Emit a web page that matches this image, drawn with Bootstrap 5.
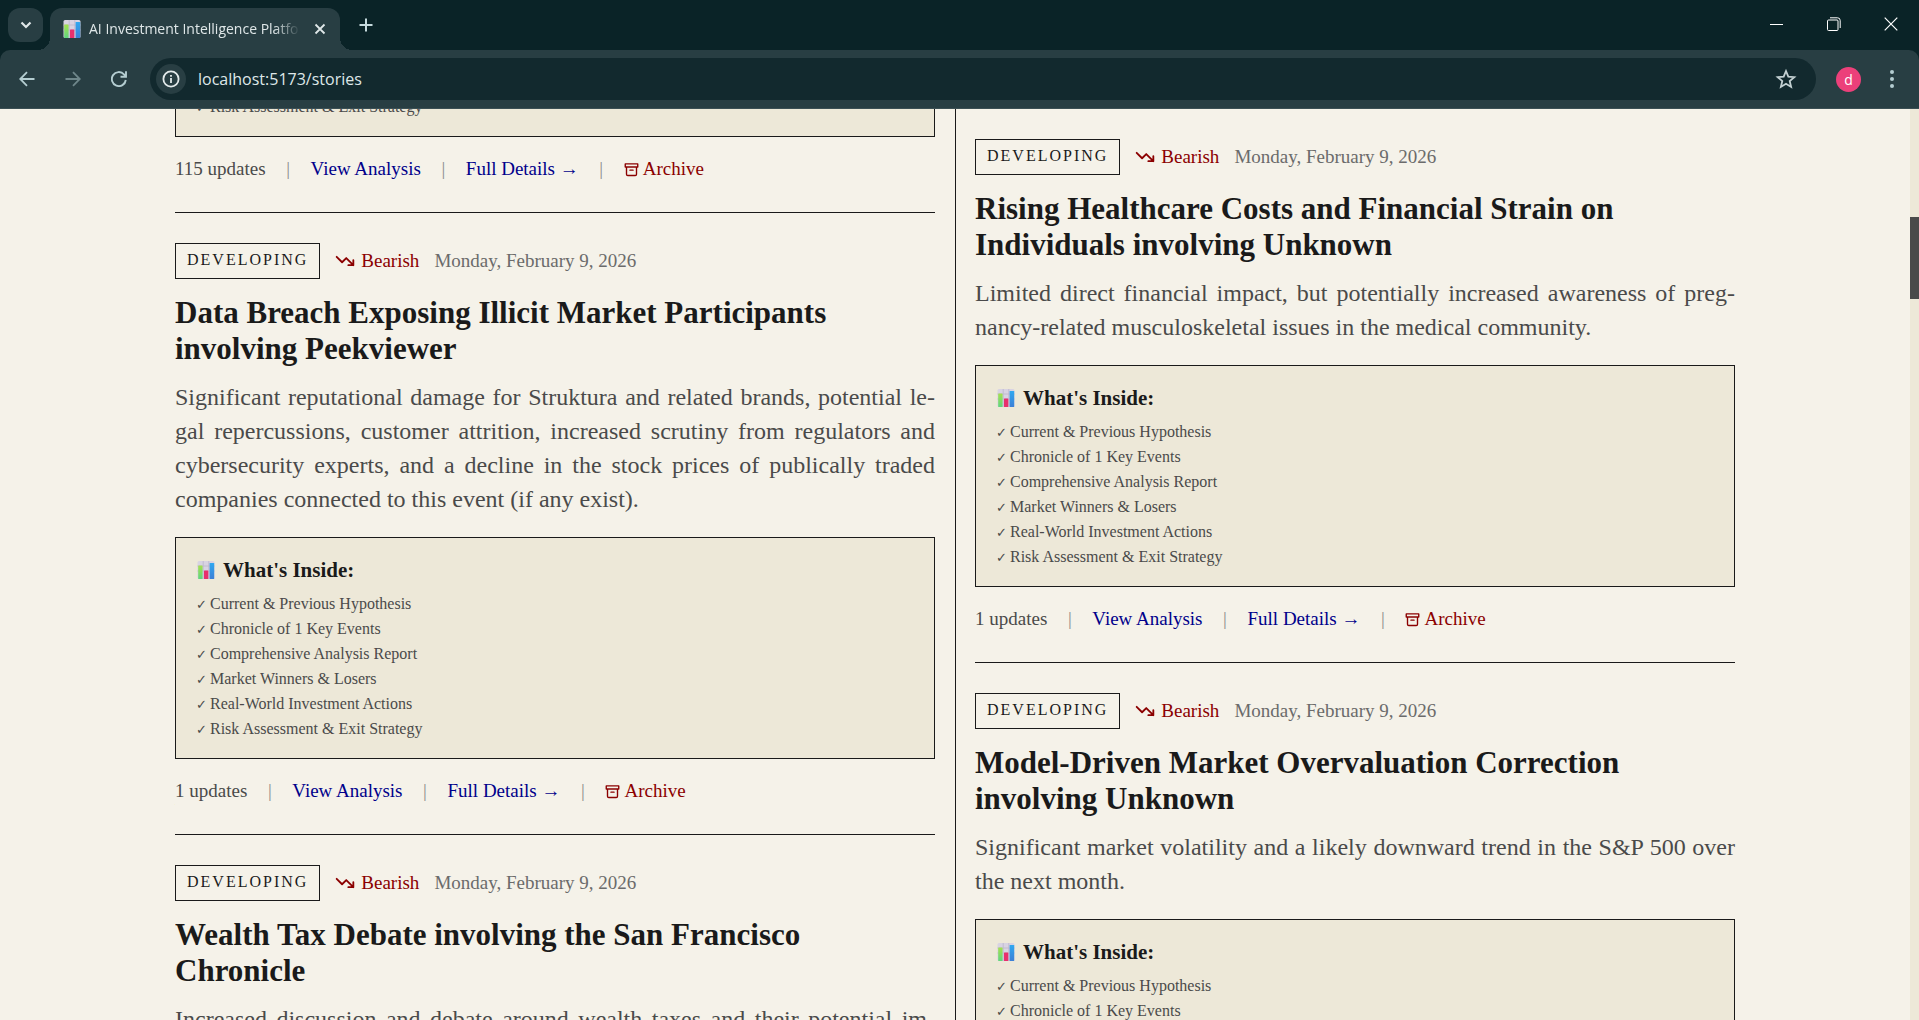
<!DOCTYPE html>
<html lang="en">
<head>
<meta charset="utf-8">
<meta name="viewport" content="width=device-width, initial-scale=1">
<title>AI Investment Intelligence Platform</title>
<link href="https://cdn.jsdelivr.net/npm/bootstrap@5.3.0/dist/css/bootstrap.min.css" rel="stylesheet">
<style>
:root { --ink: #1a1a1a; --paper: #f5f2e9; --sand: #ede8d8; --soft: #4a4a4a; --serif: "Liberation Serif", "Times New Roman", serif; --ui: "Open Sans", "Noto Sans", sans-serif; }
body { background: var(--paper); font-family: var(--serif); color: var(--ink); }
svg { display: block; flex: none; }
a { text-decoration: none; }

/* browser frame */
.tabstrip { height: 50px; background: #0a2327; padding-left: 8px; font-family: var(--ui); color: #dfe7e8; }
.plain { border: 0; background: none; padding: 0; color: inherit; display: flex; align-items: center; justify-content: center; }
.tabsearch { width: 35px; height: 34px; border-radius: 12px; background: #283e43; }
.tab-item { position: relative; width: 290px; height: 42px; margin-left: 7px; padding: 0 14px 0 13px; border-radius: 12px 12px 0 0; background: #283e43; font-size: 14px; }
.tab-item::before, .tab-item::after { content: ""; position: absolute; bottom: 0; width: 12px; height: 12px; }
.tab-item::before { left: -12px; background: radial-gradient(circle at 0 0, transparent 12px, #283e43 12px); }
.tab-item::after { right: -12px; background: radial-gradient(circle at 100% 0, transparent 12px, #283e43 12px); }
.tab-title { width: 211px; line-height: 20px; white-space: nowrap; overflow: hidden; -webkit-mask-image: linear-gradient(90deg, #000 185px, transparent 211px); mask-image: linear-gradient(90deg, #000 185px, transparent 211px); }
.winbtn { width: 57px; height: 48px; color: #fff; }
.newtab { width: 52px; height: 50px; }
.frame-top { background: #0a2327; }
.toolbar { height: 59px; padding: 0 16px; background: #283e43; border-bottom: 1px solid #3b4f54; border-radius: 10px 10px 0 0; color: #b4cdd1; font-family: var(--ui); }
.navbtn { width: 22px; height: 30px; }
.omnibox { height: 42px; border-radius: 21px; background: #12292e; margin: 0 20px; padding: 0 19px 0 6px; }
.siteinfo { width: 30px; height: 30px; border-radius: 50%; background: #283e43; color: #e3eaeb; }
.omnibox input { border: 0; outline: 0; background: none; color: #dfe7e8; font-size: 16px; line-height: 24px; padding: 0; }
.avatar { width: 25px; height: 25px; margin-right: 20px; border-radius: 50%; background: #ec407a; color: #fff; font-size: 14px; }

/* page */
.viewport { height: calc(100vh - 109px); }
.track { width: 9px; background: var(--sand); padding-top: 108px; }
.thumb { height: 82px; background: #4a4a4a; }
.paper-wrap { max-width: 1600px; padding: 0 20px; }
.col-left { padding-right: 20px; }
.col-right { padding-left: 19px; border-left: 1px solid var(--ink); }
.scrolled { margin-top: -194px; }
.story { padding: 30px 0 31px; border-bottom: 1px solid var(--ink); }
.story.scrolled { padding-top: 0; }
.status { border: 1px solid var(--ink); height: 36px; padding: 0 11px; font-size: 16px; line-height: 32px; letter-spacing: 2px; }
.meta { gap: 15px; font-size: 19px; line-height: 30px; }
.trend { gap: 6px; color: #8b0000; }
.date { color: #6b6b6b; }
.headline { margin: 16px 0 13px; font-size: 31px; line-height: 36px; font-weight: 700; }
.summary { margin: 0 0 21px; font-size: 24px; line-height: 34px; color: var(--soft); }
.full-line { display: block; text-align: justify; text-align-last: justify; white-space: nowrap; }
.inside { border: 1px solid var(--ink); background: var(--sand); padding: 20px; height: 222px; }
.inside h3 { margin: 0 0 9px; gap: 7px; font-size: 21px; line-height: 24px; font-weight: 700; }
.inside ul { font-size: 16px; line-height: 25px; color: var(--soft); }
.inside li::before { content: "✓"; font-family: "DejaVu Sans", sans-serif; font-size: 13px; line-height: 1; display: inline-block; width: 14px; }
.actions { margin-top: 20px; gap: 21px; font-size: 19px; line-height: 24px; color: var(--soft); }
.actions a { color: #00008b; }
.actions .archive { color: #8b0000; gap: 4px; }
.sep { width: 3px; display: flex; justify-content: center; color: #8c8c8c; }
</style>
</head>
<body class="overflow-hidden">

<svg width="0" height="0" class="position-absolute">
  <defs>
    <linearGradient id="gg" x1="0" y1="0" x2="0" y2="1"><stop offset="0" stop-color="#a5e04f"/><stop offset="1" stop-color="#5fd67e"/></linearGradient>
    <linearGradient id="gb" x1="0" y1="0" x2="0" y2="1"><stop offset="0" stop-color="#2fa8f0"/><stop offset="1" stop-color="#3d7fd6"/></linearGradient>
    <symbol id="chart" viewBox="0 0 18 18">
      <rect x=".5" y="0" width="17" height="18" rx="1.5" fill="#d8d3e2"/>
      <path d="M6.2 0v18M11.8 0v18M.5 5h17M.5 10h17" stroke="#bdb6cb" stroke-width=".8"/>
      <rect x="1.2" y="4.5" width="4.4" height="13.5" rx=".6" fill="url(#gg)"/>
      <rect x="7" y="9.5" width="4.3" height="8.5" rx=".6" fill="#e8306d"/>
      <rect x="12.6" y="2" width="4.6" height="16" rx=".6" fill="url(#gb)"/>
    </symbol>
    <symbol id="down" viewBox="0 0 24 24"><path d="M22 17l-8.500-8.500-5 5L2 7M16 17h6v-6" fill="none" stroke="currentColor" stroke-width="2.200" stroke-linecap="round" stroke-linejoin="round"/></symbol>
    <symbol id="box" viewBox="0 0 24 24"><path d="M2 3h20v5H2zM4 8v11.500q0 2 2 2h12q2 0 2-2V8M9.500 13h5" fill="none" stroke="currentColor" stroke-width="2.200" stroke-linejoin="round" stroke-linecap="round"/></symbol>
  </defs>
</svg>

<header class="frame-top">
  <div class="tabstrip d-flex">
    <button class="plain tabsearch mt-2" aria-label="Search tabs"><svg width="12" height="12" viewBox="0 0 12 12"><path d="M1.500 3.500L6 8l4.500-4.500" fill="none" stroke="currentColor" stroke-width="2.200"/></svg></button>
    <div class="tab-item d-flex align-items-center mt-2">
      <svg width="18" height="18" class="me-2"><use href="#chart"/></svg>
      <span class="tab-title">AI Investment Intelligence Platfo</span>
      <button class="plain ms-auto" aria-label="Close tab"><svg width="12" height="12" viewBox="0 0 12 12"><path d="M1.500 1.500l9 9M10.500 1.500l-9 9" stroke="currentColor" stroke-width="1.800"/></svg></button>
    </div>
    <button class="plain newtab" aria-label="New tab"><svg width="14" height="14" viewBox="0 0 14 14"><path d="M7 .5v13M.5 7h13" stroke="#c5dadd" stroke-width="2"/></svg></button>
    <div class="d-flex ms-auto">
      <button class="plain winbtn" aria-label="Minimize"><svg width="13" height="13" viewBox="0 0 13 13"><path d="M0 6.500h13" stroke="currentColor"/></svg></button>
      <button class="plain winbtn" aria-label="Restore"><svg width="14" height="14" viewBox="0 0 14 14"><path d="M3 .8h7.500q2.700 0 2.700 2.700V11" fill="none" stroke="currentColor"/><rect x=".5" y="3" width="10.500" height="10.500" rx="1" fill="none" stroke="currentColor"/></svg></button>
      <button class="plain winbtn" aria-label="Close"><svg width="14" height="14" viewBox="0 0 14 14"><path d="M.7.7l12.600 12.600M13.300.7L.7 13.300" stroke="currentColor" stroke-width="1.200"/></svg></button>
    </div>
  </div>
  <div class="toolbar d-flex align-items-center">
    <button class="plain navbtn" aria-label="Back"><svg width="16" height="16" viewBox="0 0 16 16"><path d="M15.500 8H1.500M8 1.200L1.200 8 8 14.800" fill="none" stroke="currentColor" stroke-width="1.800"/></svg></button>
    <button class="plain navbtn ms-4 opacity-50" aria-label="Forward"><svg width="16" height="16" viewBox="0 0 16 16"><path d="M.5 8h14M8 1.200L14.800 8 8 14.800" fill="none" stroke="currentColor" stroke-width="1.800"/></svg></button>
    <button class="plain navbtn ms-4" aria-label="Reload"><svg width="16" height="16" viewBox="0 0 16 16"><path d="M14.800 9A7 7 0 1 1 13 3.300L14.500 5M15 .3v5.500H9.500" fill="none" stroke="currentColor" stroke-width="1.900"/></svg></button>
    <div class="omnibox d-flex align-items-center flex-grow-1">
      <button class="plain siteinfo" aria-label="Site information"><svg width="18" height="18" viewBox="0 0 18 18"><circle cx="9" cy="9" r="7.600" fill="none" stroke="currentColor" stroke-width="1.800"/><path d="M9 8v5M9 5v1.800" stroke="currentColor" stroke-width="1.800"/></svg></button>
      <input class="flex-grow-1 ms-2 ps-1" type="text" aria-label="Address" value="localhost:5173/stories">
      <button class="plain" aria-label="Bookmark"><svg width="22" height="22" viewBox="0 0 22 22"><path d="M11 3l2.300 5.600 6 .5-4.600 3.900 1.400 5.900L11 15.700l-5.100 3.200 1.400-5.900L2.700 9.100l6-.5z" fill="none" stroke="#c3d0d2" stroke-width="1.800"/></svg></button>
    </div>
    <button class="plain avatar" aria-label="Profile">d</button>
    <button class="plain navbtn" aria-label="Menu"><svg width="4" height="18" viewBox="0 0 4 18" fill="currentColor"><circle cx="2" cy="2" r="2"/><circle cx="2" cy="9" r="2"/><circle cx="2" cy="16" r="2"/></svg></button>
  </div>
</header>

<div class="viewport d-flex overflow-hidden">
  <main class="flex-grow-1 overflow-hidden">
    <div class="paper-wrap container-fluid">
      <div class="row g-0">
        <section class="col-6 col-left" id="left">
          <article class="story scrolled">
            <div class="inside" data-events="115"></div>
            <div class="actions d-flex" data-updates="115"></div>
          </article>
          <article class="story">
            <div class="meta d-flex align-items-center"></div>
            <h2 class="headline">Data Breach Exposing Illicit Market Participants involving Peekviewer</h2>
            <p class="summary"><span class="full-line">Significant reputational damage for Struktura and related brands, potential le-</span><span class="full-line">gal repercussions, customer attrition, increased scrutiny from regulators and</span><span class="full-line">cybersecurity experts, and a decline in the stock prices of publically traded</span>companies connected to this event (if any exist).</p>
            <div class="inside" data-events="1"></div>
            <div class="actions d-flex" data-updates="1"></div>
          </article>
          <article class="story">
            <div class="meta d-flex align-items-center"></div>
            <h2 class="headline">Wealth Tax Debate involving the San Francisco Chronicle</h2>
            <p class="summary"><span class="full-line">Increased discussion and debate around wealth taxes and their potential im-</span></p>
          </article>
        </section>
        <section class="col-6 col-right" id="right">
          <article class="story">
            <div class="meta d-flex align-items-center"></div>
            <h2 class="headline">Rising Healthcare Costs and Financial Strain on Individuals involving Unknown</h2>
            <p class="summary"><span class="full-line">Limited direct financial impact, but potentially increased awareness of preg-</span>nancy-related musculoskeletal issues in the medical community.</p>
            <div class="inside" data-events="1"></div>
            <div class="actions d-flex" data-updates="1"></div>
          </article>
          <article class="story">
            <div class="meta d-flex align-items-center"></div>
            <h2 class="headline">Model-Driven Market Overvaluation Correction involving Unknown</h2>
            <p class="summary"><span class="full-line">Significant market volatility and a likely downward trend in the S&amp;P 500 over</span>the next month.</p>
            <div class="inside" data-events="1"></div>
          </article>
        </section>
      </div>
    </div>
  </main>
  <div class="track"><div class="thumb"></div></div>
</div>

<script src="https://cdn.jsdelivr.net/npm/bootstrap@5.3.0/dist/js/bootstrap.bundle.min.js"></script>
<script>
document.querySelectorAll('.meta').forEach(function (el) {
  el.innerHTML = '<span class="status">DEVELOPING</span><span class="trend d-flex align-items-center"><svg width="20" height="20"><use href="#down"/></svg>Bearish</span><span class="date">Monday, February 9, 2026</span>';
});
document.querySelectorAll('.inside').forEach(function (el) {
  var items = ['Current &amp; Previous Hypothesis', 'Chronicle of ' + el.dataset.events + ' Key Events', 'Comprehensive Analysis Report', 'Market Winners &amp; Losers', 'Real-World Investment Actions', 'Risk Assessment &amp; Exit Strategy'];
  el.innerHTML = '<h3 class="d-flex align-items-center"><svg width="20" height="18"><use href="#chart"/></svg>What\'s Inside:</h3><ul class="list-unstyled mb-0"><li>' + items.join('</li><li>') + '</li></ul>';
});
document.querySelectorAll('.actions').forEach(function (el) {
  var sep = '<span class="sep">|</span>';
  el.innerHTML = '<span>' + el.dataset.updates + ' updates</span>' + sep + '<a href="#">View Analysis</a>' + sep + '<a href="#">Full Details →</a>' + sep + '<button class="plain archive"><svg width="15" height="15"><use href="#box"/></svg>Archive</button>';
});
</script>
</body>
</html>
